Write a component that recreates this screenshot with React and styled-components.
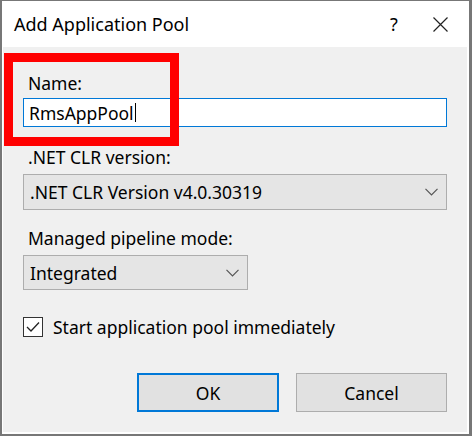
import React from 'react'
import styled, { createGlobalStyle } from 'styled-components'

const GlobalStyle = createGlobalStyle`
  html, body {
    margin: 0;
    padding: 0;
    background: #f0f0f0;
  }
  body {
    font-family: "Noto Sans", "Open Sans", "Liberation Sans", sans-serif;
    color: #000;
  }
`

const Window = styled.div`
  position: relative;
  width: 472px;
  height: 436px;
  box-sizing: border-box;
  border: 2px solid #777;
  border-top-width: 1px;
  border-right-width: 3px;
  background: #f0f0f0;
  display: flex;
  flex-direction: column;
  overflow: hidden;
`

const TitleBar = styled.div`
  height: 46px;
  background: #fff;
  display: flex;
  align-items: center;
  padding-left: 12px;
  flex-shrink: 0;
`

const Title = styled.div`
  flex: 1;
  font-size: 18px;
`

const TitleButton = styled.div`
  width: ${p => p.w}px;
  display: flex;
  justify-content: center;
  align-items: center;
  font-size: 18px;
  height: 46px;
`

const Body = styled.div`
  flex: 1;
  display: flex;
  flex-direction: column;
  padding: 26px 22px 0 21px;
  box-shadow: inset 1px 0 #fff, inset -2px 0 #fff, inset 0 -2px #fff;
`

const Label = styled.div`
  font-size: 17.5px;
  line-height: 20px;
  height: 20px;
  margin-top: ${p => p.mt || 0}px;
  margin-left: 5px;
`

const TextBox = styled.div`
  margin-top: 5px;
  height: 29px;
  box-sizing: border-box;
  border: 1px solid #0078d7;
  background: #fff;
  display: flex;
  align-items: center;
  padding-left: 5px;
  font-size: 17.5px;
`

const Caret = styled.span`
  display: inline-block;
  width: 1px;
  height: 19px;
  background: #000;
  margin-left: 1px;
`

const Select = styled.div`
  margin-top: 7px;
  width: ${p => p.w};
  height: ${p => p.h}px;
  box-sizing: border-box;
  border: 1px solid #adadad;
  background: #e5e5e5;
  display: flex;
  align-items: center;
  justify-content: space-between;
  padding: 0 8px 0 6px;
  font-size: 17.5px;
`

const CheckRow = styled.label`
  margin-top: 27px;
  display: flex;
  align-items: center;
  gap: 10px;
  height: 20px;
  font-size: 17.5px;
`

const CheckBox = styled.span`
  width: 20px;
  height: 20px;
  box-sizing: border-box;
  border: 1px solid #333;
  background: #fff;
  display: flex;
  align-items: center;
  justify-content: center;
`

const Buttons = styled.div`
  margin-top: 36px;
  display: flex;
  justify-content: flex-end;
  gap: 17px;
`

const Button = styled.div`
  width: ${p => p.w}px;
  height: 39px;
  box-sizing: border-box;
  border: ${p => (p.primary ? '2px solid #0078d7' : '1px solid #adadad')};
  background: #e1e1e1;
  display: flex;
  align-items: center;
  justify-content: center;
  font-size: 17.5px;
`

const Highlight = styled.div`
  position: absolute;
  left: 2px;
  top: 52px;
  width: 175px;
  height: 93px;
  box-sizing: border-box;
  border: 9px solid #ff0000;
  pointer-events: none;
`

const Chevron = () => (
  <svg width="13" height="8" viewBox="0 0 13 8">
    <path d="M0.5 0.8 L6.5 6.8 L12.5 0.8" fill="none" stroke="#555" strokeWidth="1.2" />
  </svg>
)

const App = () => {
  return (
    <>
      <GlobalStyle />
      <Window>
        <TitleBar>
          <Title>Add Application Pool</Title>
          <TitleButton w={34}>?</TitleButton>
          <TitleButton w={58}>
            <svg width="15" height="15" viewBox="0 0 15 15">
              <path d="M0.5 0.5 L14.5 14.5 M14.5 0.5 L0.5 14.5" stroke="#222" strokeWidth="1.2" />
            </svg>
          </TitleButton>
        </TitleBar>
        <Body>
          <Label>Name:</Label>
          <TextBox>
            RmsAppPool<Caret />
          </TextBox>
          <Label mt={20}>.NET CLR version:</Label>
          <Select w="100%" h={36}>
            <span>.NET CLR Version v4.0.30319</span>
            <Chevron />
          </Select>
          <Label mt={18}>Managed pipeline mode:</Label>
          <Select w="225px" h={35}>
            <span>Integrated</span>
            <Chevron />
          </Select>
          <CheckRow>
            <CheckBox>
              <svg width="14" height="12" viewBox="0 0 14 12">
                <path d="M1 6 L5 10 L13 1.5" fill="none" stroke="#222" strokeWidth="1.3" />
              </svg>
            </CheckBox>
            Start application pool immediately
          </CheckRow>
          <Buttons>
            <Button primary w={142}>OK</Button>
            <Button w={151}>Cancel</Button>
          </Buttons>
        </Body>
        <Highlight />
      </Window>
    </>
  )
}

export default App
